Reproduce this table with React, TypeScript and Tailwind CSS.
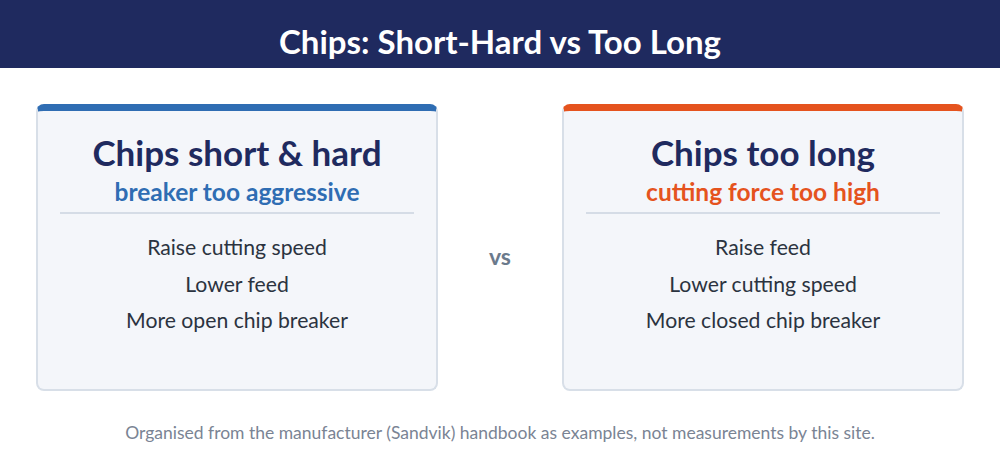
export default function App() {
  const cards = [
    {
      title: "Chips short & hard",
      cause: "breaker too aggressive",
      accent: "border-t-[#2f6db3]",
      causeColor: "text-[#2f6db3]",
      fixes: ["Raise cutting speed", "Lower feed", "More open chip breaker"],
    },
    {
      title: "Chips too long",
      cause: "cutting force too high",
      accent: "border-t-[#e5531e]",
      causeColor: "text-[#e5531e]",
      fixes: ["Raise feed", "Lower cutting speed", "More closed chip breaker"],
    },
  ];

  const Card = ({ card }: { card: (typeof cards)[number] }) => (
    <div
      className={`w-[402px] h-[287px] rounded-lg border-2 border-[#d8dfe8] border-t-[7px] ${card.accent} bg-[#f4f6fa] flex flex-col items-center pt-[21px] px-[22px]`}
    >
      <h2 className="text-[35px] leading-[40px] font-bold text-[#1f2a5f]">{card.title}</h2>
      <p className={`text-[24.5px] leading-[28px] font-bold ${card.causeColor} mt-[6px]`}>{card.cause}</p>
      <div className="w-full h-[2px] bg-[#d5dce6] mt-[6px] mb-[15px]" />
      <ul className="flex flex-col items-center">
        {card.fixes.map((f) => (
          <li key={f} className="text-[21.2px] leading-[36.5px] text-[#2b3340]">
            {f}
          </li>
        ))}
      </ul>
    </div>
  );

  return (
    <div className="w-[1000px] h-[452px] bg-white flex flex-col" style={{ fontFamily: "Lato, 'Noto Sans', sans-serif" }}>
      <header className="h-[68px] bg-[#1f2a5f] flex items-center justify-center pt-[16px]">
        <h1 className="text-[33px] font-bold text-white">Chips: Short-Hard vs Too Long</h1>
      </header>

      <div className="flex justify-center pt-[36px]">
        <Card card={cards[0]} />
        <div className="w-[124px] flex items-center justify-center pt-[18px]">
          <span className="text-[23px] font-bold text-[#6b7a8c]">vs</span>
        </div>
        <Card card={cards[1]} />
      </div>

      <p className="text-center text-[17.5px] text-[#7a8494] mt-[29px]">
        Organised from the manufacturer (Sandvik) handbook as examples, not measurements by this site.
      </p>
    </div>
  );
}
